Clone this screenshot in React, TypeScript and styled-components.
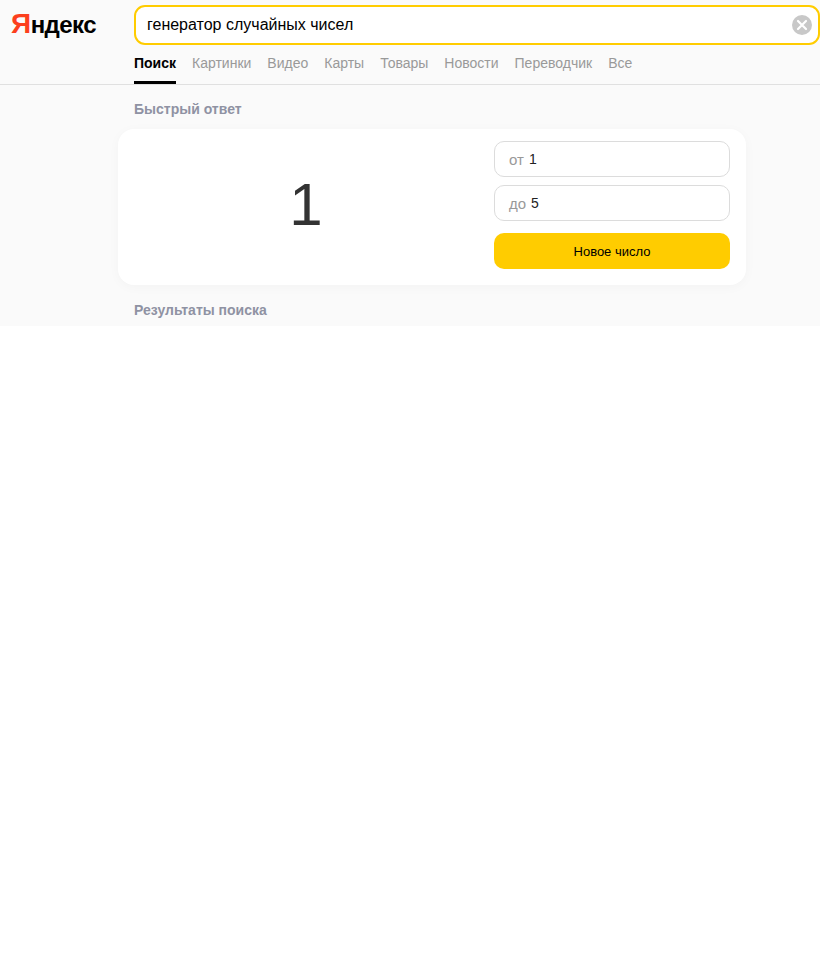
import React from "react";
import styled, { createGlobalStyle } from "styled-components";

const Global = createGlobalStyle`
  html, body { margin: 0; padding: 0; background: #fff; }
  body { font-family: "Liberation Sans", Arial, sans-serif; }
  * { box-sizing: border-box; }
`;

const Page = styled.div`
  width: 820px;
  height: 975px;
  overflow: hidden;
  background: #fff;
`;

const Header = styled.header`
  height: 85px;
  background: #fafafa;
  border-bottom: 1px solid #e0e0e0;
  display: grid;
  grid-template-columns: 134px 1fr;
`;

const Logo = styled.div`
  padding: 8px 0 0 11px;
  font-size: 24px;
  line-height: 32px;
  font-weight: 700;
  letter-spacing: -0.55px;
  color: #000;
  white-space: nowrap;
`;

const LogoAccent = styled.span`
  color: #fc3f1d;
  font-size: 28px;
  letter-spacing: -0.5px;
`;

const HeaderMain = styled.div`
  display: flex;
  flex-direction: column;
  padding-top: 5px;
`;

const SearchBox = styled.div`
  height: 40px;
  width: 686px;
  background: #fff;
  border: 2px solid #fc0;
  border-radius: 11px;
  display: flex;
  align-items: center;
  justify-content: space-between;
  padding: 0 6px 0 11px;
`;

const SearchText = styled.span`
  font-size: 16px;
  color: #000;
`;

const ClearIcon = styled.svg`
  width: 20px;
  height: 20px;
  display: block;
`;

const Tabs = styled.nav`
  display: flex;
  gap: 16px;
  height: 36px;
  margin-top: 3px;
`;

const Tab = styled.a<{ $active?: boolean }>`
  display: block;
  height: 36px;
  padding-top: 7px;
  font-size: 14px;
  line-height: 17px;
  font-weight: ${(p) => (p.$active ? 700 : 400)};
  color: ${(p) => (p.$active ? "#000" : "#999")};
  border-bottom: 3px solid ${(p) => (p.$active ? "#000" : "transparent")};
`;

const Content = styled.main`
  height: 241px;
  background: #fafafa;
  padding-top: 16px;
`;

const SectionTitle = styled.h2`
  margin: 0;
  padding-left: 134px;
  font-size: 14px;
  line-height: 17px;
  font-weight: 700;
  color: #8f92a3;
`;

const Card = styled.section`
  width: 628px;
  height: 156px;
  margin: 11px 0 17px 118px;
  padding: 12px 16px 16px 0;
  background: #fff;
  border-radius: 16px;
  box-shadow: 0 2px 12px rgba(0, 0, 0, 0.03);
  display: grid;
  grid-template-columns: 376px 236px;
`;

const Value = styled.div`
  display: flex;
  align-items: center;
  justify-content: center;
  font-size: 60px;
  line-height: 64px;
  color: #333;
`;

const Controls = styled.div`
  display: flex;
  flex-direction: column;
  gap: 8px;
`;

const Field = styled.div`
  height: 36px;
  border: 1px solid #dcdcdc;
  border-radius: 10px;
  padding-left: 14px;
  display: flex;
  align-items: center;
  gap: 5px;
  font-size: 14px;
`;

const FieldLabel = styled.span`
  color: #999;
  font-size: 15px;
`;

const FieldValue = styled.span`
  color: #222;
`;

const Button = styled.button`
  margin-top: 4px;
  height: 36px;
  border: 0;
  border-radius: 10px;
  background: #fc0;
  color: #000;
  font-family: inherit;
  font-size: 13px;
`;

const tabs = ["Картинки", "Видео", "Карты", "Товары", "Новости", "Переводчик", "Все"];

export default function App() {
  return (
    <Page>
      <Global />
      <Header>
        <Logo>
          <LogoAccent>Я</LogoAccent>ндекс
        </Logo>
        <HeaderMain>
          <SearchBox>
            <SearchText>генератор случайных чисел</SearchText>
            <ClearIcon viewBox="0 0 20 20">
              <circle cx="10" cy="10" r="10" fill="#c8c8c8" />
              <path d="M6 6l8 8M14 6l-8 8" stroke="#fff" strokeWidth="2.2" strokeLinecap="round" />
            </ClearIcon>
          </SearchBox>
          <Tabs>
            <Tab $active>Поиск</Tab>
            {tabs.map((t) => (
              <Tab key={t}>{t}</Tab>
            ))}
          </Tabs>
        </HeaderMain>
      </Header>
      <Content>
        <SectionTitle>Быстрый ответ</SectionTitle>
        <Card>
          <Value>1</Value>
          <Controls>
            <Field>
              <FieldLabel>от</FieldLabel>
              <FieldValue>1</FieldValue>
            </Field>
            <Field>
              <FieldLabel>до</FieldLabel>
              <FieldValue>5</FieldValue>
            </Field>
            <Button>Новое число</Button>
          </Controls>
        </Card>
        <SectionTitle>Результаты поиска</SectionTitle>
      </Content>
    </Page>
  );
}
